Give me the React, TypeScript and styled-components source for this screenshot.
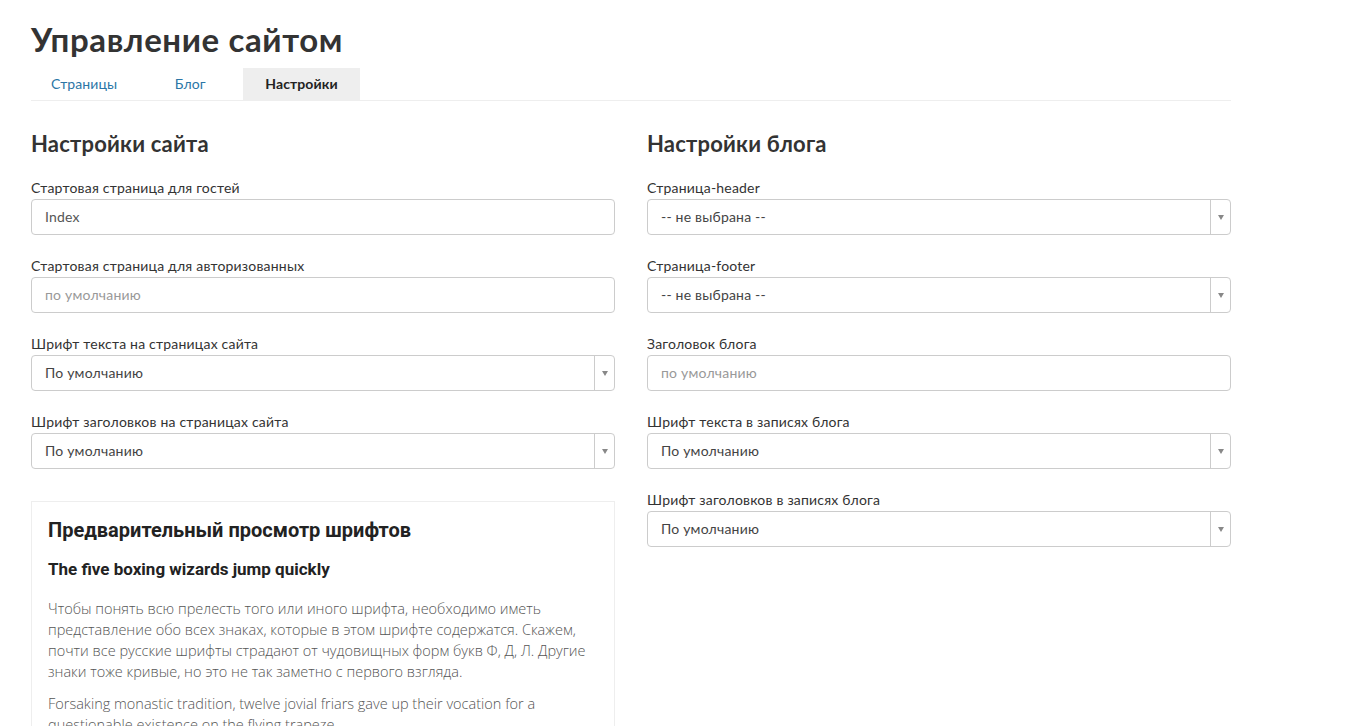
import styled, { createGlobalStyle } from 'styled-components'

const GlobalStyle = createGlobalStyle`
  body {
    margin: 0;
    background: #fff;
    font-family: Lato, 'Open Sans', sans-serif;
    color: #333;
  }
`

const Page = styled.div`
  width: 1200px;
  padding: 17px 0 0 31px;
`

const Title = styled.h1`
  margin: 0;
  font-size: 33px;
  line-height: 44px;
  font-weight: 700;
  color: #333;
  letter-spacing: 0.6px;
`

const Tabs = styled.div`
  display: flex;
  margin-top: 7px;
  border-bottom: 1px solid #eee;
`

const Tab = styled.div<{ active?: boolean }>`
  min-width: 106px;
  box-sizing: border-box;
  padding: 0 ${(p) => (p.active ? 22 : 20)}px;
  height: 32px;
  line-height: 32px;
  text-align: center;
  font-size: 14px;
  letter-spacing: 0.1px;
  font-weight: ${(p) => (p.active ? 700 : 400)};
  color: ${(p) => (p.active ? '#222' : '#2b76a6')};
  background: ${(p) => (p.active ? '#eee' : 'transparent')};
`

const Columns = styled.div`
  display: grid;
  grid-template-columns: 584px 584px;
  gap: 32px;
  margin-top: 30px;
`

const Column = styled.div`
  display: flex;
  flex-direction: column;
`

const SectionTitle = styled.h2`
  margin: 0 0 21px;
  font-size: 22px;
  line-height: 26px;
  font-weight: 700;
  color: #333;
  letter-spacing: 0.2px;
`

const Field = styled.div`
  margin-bottom: 21px;
`

const Label = styled.div`
  font-size: 14px;
  line-height: 20px;
  margin-bottom: 1px;
  color: #333;
  letter-spacing: 0.2px;
`

const Input = styled.div<{ placeholder?: boolean }>`
  box-sizing: border-box;
  height: 36px;
  border: 1px solid #ccc;
  border-radius: 4px;
  padding: 0 13px;
  line-height: 34px;
  font-size: 14px;
  letter-spacing: 0.2px;
  color: ${(p) => (p.placeholder ? '#999' : '#555')};
`

const Select = styled.div`
  box-sizing: border-box;
  height: 36px;
  border: 1px solid #ccc;
  border-radius: 4px;
  display: flex;
  font-size: 14px;
  letter-spacing: 0.2px;
  color: #444;
`

const SelectValue = styled.div`
  flex: 1;
  padding: 0 13px;
  line-height: 34px;
`

const SelectArrow = styled.div`
  width: 19px;
  border-left: 1px solid #ccc;
  display: flex;
  align-items: center;
  justify-content: center;

  &::after {
    content: '';
    border-left: 3.5px solid transparent;
    border-right: 3.5px solid transparent;
    border-top: 5px solid #888;
  }
`

const Preview = styled.div`
  margin-top: 11px;
  border: 1px solid #eee;
  padding: 16px 16px 0;
  height: 240px;
  overflow: hidden;
  font-family: Roboto, sans-serif;
`

const PreviewTitle = styled.div`
  font-size: 20px;
  line-height: 24px;
  font-weight: 700;
  color: #222;
`

const PreviewSubtitle = styled.div`
  margin-top: 16px;
  font-size: 17px;
  line-height: 22px;
  font-weight: 700;
  color: #222;
`

const PreviewText = styled.p`
  margin: 0 0 11px;
  font-family: 'Open Sans', sans-serif;
  font-weight: 300;
  font-size: 14.5px;
  line-height: 21px;
  color: #555;

  &:first-of-type {
    margin-top: 18px;
  }
`

const TextField = ({ label, value, placeholder }: { label: string; value: string; placeholder?: boolean }) => (
  <Field>
    <Label>{label}</Label>
    <Input placeholder={placeholder}>{value}</Input>
  </Field>
)

const SelectField = ({ label, value }: { label: string; value: string }) => (
  <Field>
    <Label>{label}</Label>
    <Select>
      <SelectValue>{value}</SelectValue>
      <SelectArrow />
    </Select>
  </Field>
)

const App = () => {
  return (
    <Page>
      <GlobalStyle />
      <Title>Управление сайтом</Title>
      <Tabs>
        <Tab>Страницы</Tab>
        <Tab>Блог</Tab>
        <Tab active>Настройки</Tab>
      </Tabs>
      <Columns>
        <Column>
          <SectionTitle>Настройки сайта</SectionTitle>
          <TextField label="Стартовая страница для гостей" value="Index" />
          <TextField label="Стартовая страница для авторизованных" value="по умолчанию" placeholder />
          <SelectField label="Шрифт текста на страницах сайта" value="По умолчанию" />
          <SelectField label="Шрифт заголовков на страницах сайта" value="По умолчанию" />
          <Preview>
            <PreviewTitle>Предварительный просмотр шрифтов</PreviewTitle>
            <PreviewSubtitle>The five boxing wizards jump quickly</PreviewSubtitle>
            <PreviewText>
              Чтобы понять всю прелесть того или иного шрифта, необходимо иметь представление обо всех знаках,
              которые в этом шрифте содержатся. Скажем, почти все русские шрифты страдают от чудовищных форм букв
              Ф, Д, Л. Другие знаки тоже кривые, но это не так заметно с первого взгляда.
            </PreviewText>
            <PreviewText>
              Forsaking monastic tradition, twelve jovial friars gave up their vocation for a questionable existence
              on the flying trapeze.
            </PreviewText>
          </Preview>
        </Column>
        <Column>
          <SectionTitle>Настройки блога</SectionTitle>
          <SelectField label="Страница-header" value="-- не выбрана --" />
          <SelectField label="Страница-footer" value="-- не выбрана --" />
          <TextField label="Заголовок блога" value="по умолчанию" placeholder />
          <SelectField label="Шрифт текста в записях блога" value="По умолчанию" />
          <SelectField label="Шрифт заголовков в записях блога" value="По умолчанию" />
        </Column>
      </Columns>
    </Page>
  )
}

export default App
